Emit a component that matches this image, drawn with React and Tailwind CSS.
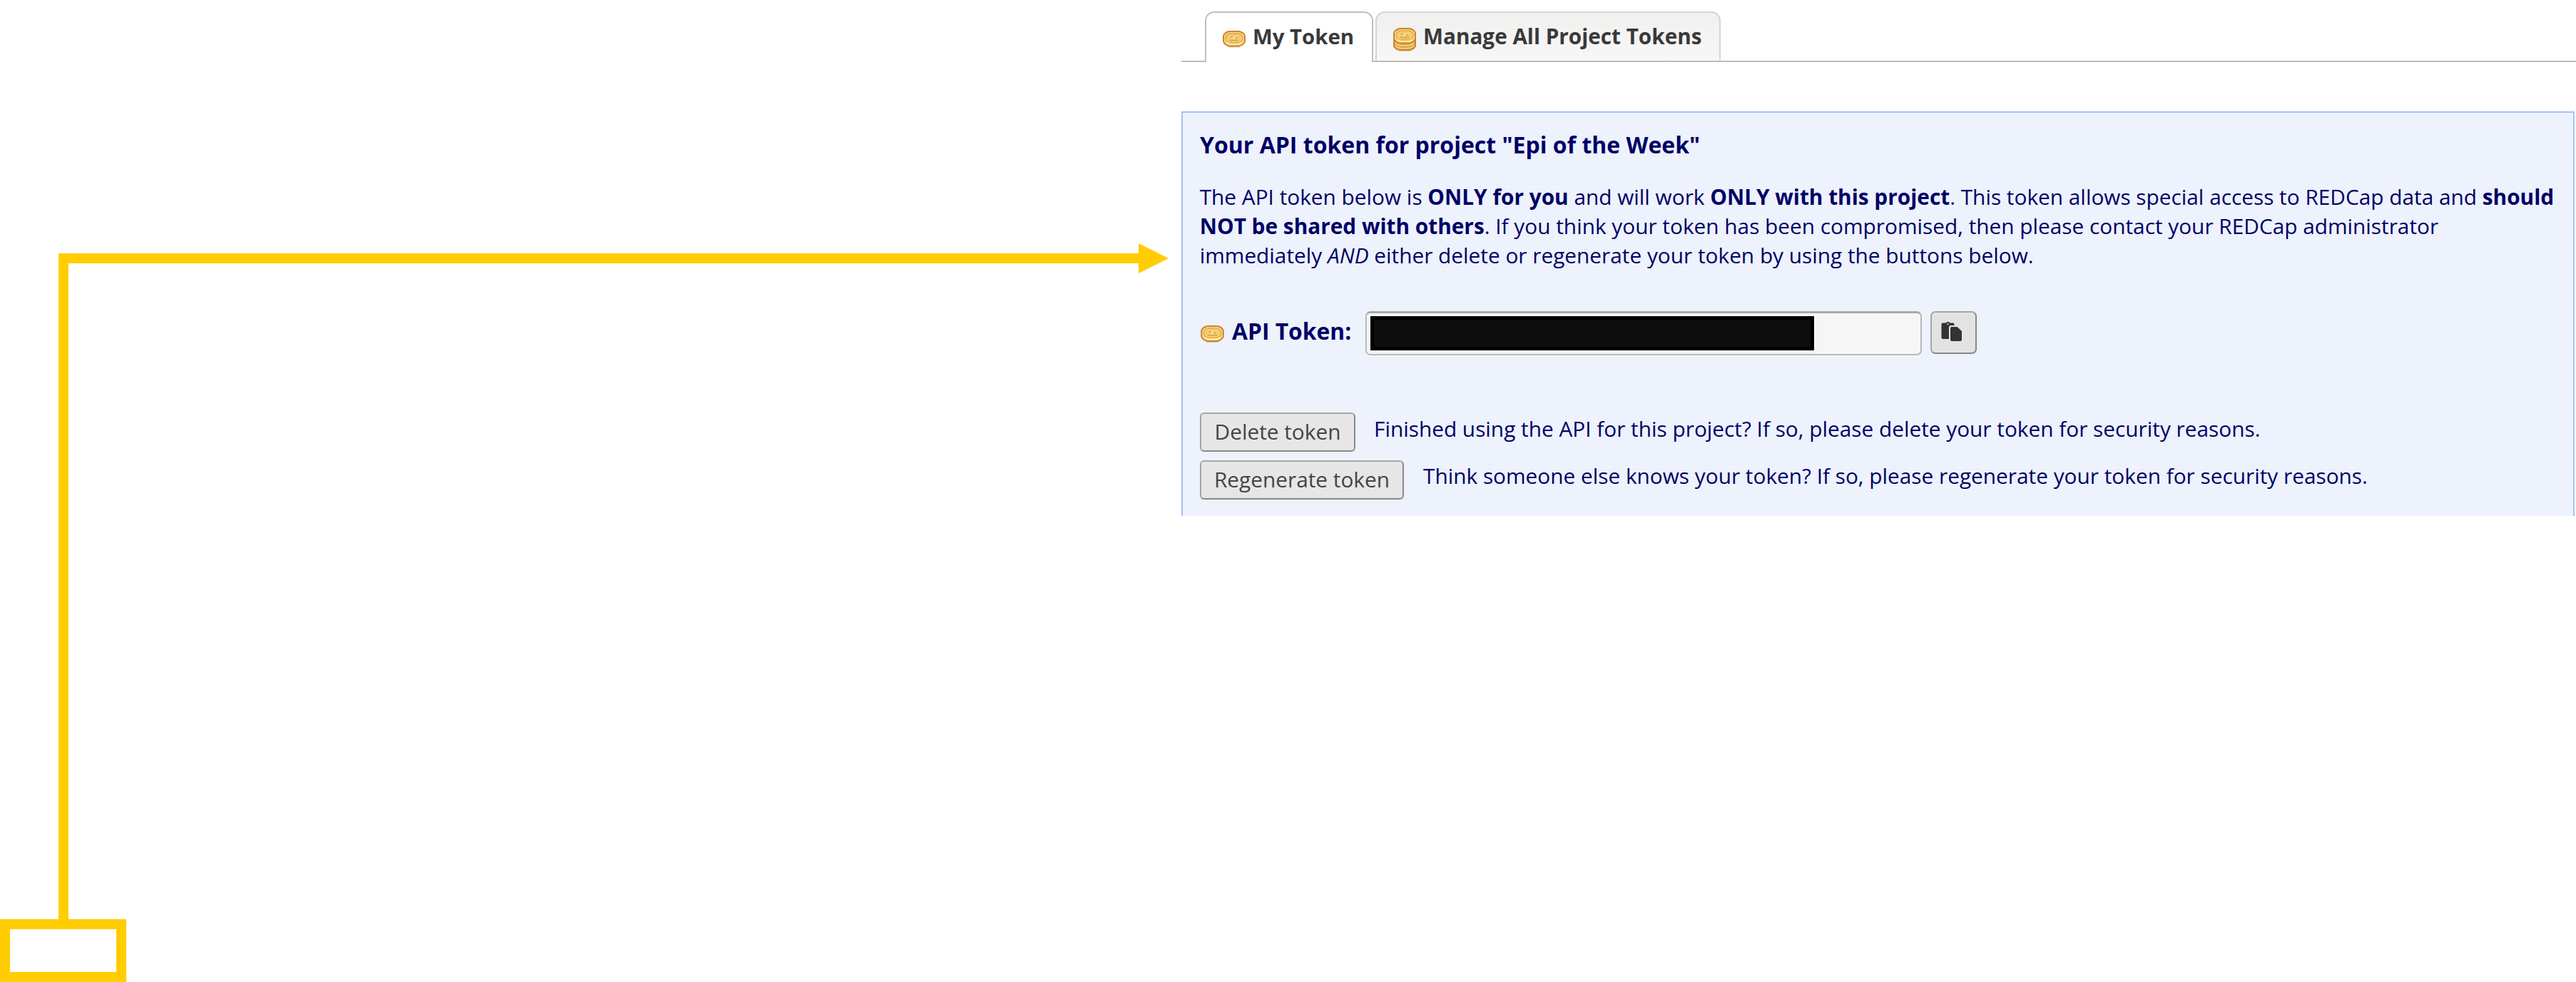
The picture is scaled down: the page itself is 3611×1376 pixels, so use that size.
function CoinFace({ y = 0 }) {
  return (
    <g transform={`translate(0 ${y})`}>
      <path d="M9 1H23C27 2 30 4 31 7V15C30 18.5 27 20.500 23 21.500H9C5 20.500 2 18.500 1 15V7C2 4 5 2 9 1Z" fill="#fbdb84" stroke="#cb8438" strokeWidth="2" strokeLinejoin="round" />
      <path d="M10 4H22C26 5 28 7 28 10V12C27 15 25 16.500 22 17H10C7 16.500 5 15 4 12V10C4 7 6 5 10 4Z" fill="#f3cd72" stroke="#dfa74b" strokeWidth="1.400" />
      <path d="M9.500 13.500H22.500M11 10L13.500 7.500M17 6.500V9.500L21 10.500" fill="none" stroke="#d6a04a" strokeWidth="1.400" />
      <path d="M14.500 11.500L18 7.500M6 16.500L10 18.800H22L26 16.500" fill="none" stroke="#ffeeae" strokeWidth="1.600" />
    </g>
  )
}

function Coin({ className }) {
  return (
    <svg viewBox="0 0 32 24" className={className} aria-hidden="true">
      <path d="M3 17.500L8.500 23.500H23.500L29 17.500Z" fill="#b9a58c" opacity="0.6" />
      <CoinFace />
    </svg>
  )
}

function CoinStack({ className }) {
  return (
    <svg viewBox="0 0 32 33" className={className} aria-hidden="true">
      <path d="M3 26L8.500 33H23.500L29 26Z" fill="#b9a58c" opacity="0.6" />
      <path d="M1 9H31V25.500C30 28.500 27 30.500 23 31H9C5 30.500 2 28.500 1 25.500Z" fill="#e0a24d" stroke="#cb8438" strokeWidth="2" strokeLinejoin="round" />
      <path d="M3 21C6 24.500 9 24.800 16 24.800S26 24.500 29 21M3 25C6 28.500 9 28.800 16 28.800S26 28.500 29 25" fill="none" stroke="#f8d377" strokeWidth="1.800" />
      <CoinFace />
    </svg>
  )
}

function PasteIcon({ className }) {
  return (
    <svg viewBox="0 0 30 28" className={className} aria-hidden="true" fill="#333333">
      <path d="M2.500 2.500H6.500A3.500 3 0 0 1 12.500 2.500H16.500Q18.500 2.500 18.500 4.500V6H14Q11 6 11 9V25H2.500Q.5 25 .5 23V4.500Q.5 2.500 2.500 2.500Z" />
      <circle cx="9.500" cy="4" r="1.300" fill="#9db4c6" />
      <path d="M15 8H22.500L29 14V26Q29 28 27 28H15Q13 28 13 26V10Q13 8 15 8Z" />
    </svg>
  )
}

function Tab({ icon, label, className, labelClass }) {
  return (
    <div className={`flex items-start rounded-t-[13px] border-x-2 border-t-2 pl-[23px] ${className}`}>
      {icon}
      <span className={`mt-[13px] whitespace-nowrap font-bold leading-[40px] text-[#393939] ${labelClass}`}>{label}</span>
    </div>
  )
}

function ActionRow({ label, text, className, buttonClass, textClass }) {
  return (
    <div className={`flex items-start ${className}`}>
      <button
        className={`flex h-[55px] justify-center rounded-[6px] border-2 border-t-[#a6a6a6] border-l-[#a6a6a6] border-r-[#888888] border-b-[#888888] bg-[#e6e6e6] pt-[5px] text-[29.800px] leading-[40px] whitespace-nowrap text-[#444444] ${buttonClass}`}
      >
        {label}
      </button>
      <span className={`mt-[2.400px] text-[29.8px] leading-[40px] whitespace-nowrap ${textClass}`}>{text}</span>
    </div>
  )
}

export default function App() {
  return (
    <div className="flex h-[1376px] w-[3611px] overflow-hidden bg-white font-['Open_Sans',sans-serif]">
      <div className="flex w-[1656px] shrink-0 flex-col">
        <svg width="1656" height="1288" viewBox="0 0 1656 1288" className="block" aria-hidden="true">
          <path d="M82 1288V355H1596V341L1638 362L1596 383V369H96V1288Z" fill="#ffcd00" />
        </svg>
        <div className="h-[88px] w-[177px] border-[14px] border-[#ffcd00]" />
      </div>

      <div className="flex w-[1955px] shrink-0 flex-col pt-[16px]">
        <div className="flex h-[71px]">
          <div className="w-[33px] border-b-[2.500px] border-[#bcbcbc]" />
          <Tab
            icon={<Coin className="mt-[25px] h-[24px] w-[32px] shrink-0" />}
            label="My Token"
            className="w-[236px] border-[#bfbfbf] bg-white"
            labelClass="ml-[10px] text-[29.400px]"
          />
          <div className="w-[3px] border-b-2 border-[#bcbcbc]" />
          <div className="flex border-b-2 border-[#bcbcbc]">
            <Tab
              icon={<CoinStack className="mt-[21px] h-[33px] w-[32px] shrink-0" />}
              label="Manage All Project Tokens"
              className="w-[484px] border-[#d4d4d4] bg-linear-to-b from-[#f0f0ef] to-[#f7f7f7]"
              labelClass="ml-[10px] text-[29.700px]"
            />
          </div>
          <div className="flex-1 border-b-2 border-[#bcbcbc]" />
        </div>

        <div className="mt-[69px] h-[567px] w-[1953px] border-x-2 border-t-2 border-[#a5c1f0] bg-[#edf2fd] pt-[23px] pl-[23px] text-[#000066]">
          <h1 className="ml-[1px] text-[32px] leading-[44px] font-bold">Your API token for project "Epi of the Week"</h1>
          <p className="mt-[29.500px] ml-[0.700px] text-[29.8px] leading-[41.400px] whitespace-nowrap">
            The API token below is <b>ONLY for you</b> and will work <b>ONLY with this project</b>. This token allows special access to REDCap data and <b>should</b>
            <br />
            <b>NOT be shared with others</b>. If you think your token has been compromised, then please contact your REDCap administrator
            <br />
            immediately <i>AND</i> either delete or regenerate your token by using the buttons below.
          </p>

          <div className="mt-[57.300px] flex h-[62px] items-start">
            <Coin className="mt-[20px] ml-[2px] h-[24.500px] w-[33px] shrink-0" />
            <span className="mt-[6px] ml-[11px] w-[187px] shrink-0 text-[31.800px] leading-[44px] font-bold whitespace-nowrap">API Token:</span>
            <div className="h-[62px] w-[780px] rounded-[7px] border-2 border-t-3 border-[#b8b8b8] border-t-[#a9a9a9] bg-[#f6f6f6] pt-[4px] pl-[5px] shadow-[0_2px_0_#f8faff]">
              <div className="h-[48px] w-[622px] border-[5px] border-black bg-[#0d0d0d]" />
            </div>
            <button className="ml-[12px] flex h-[60px] w-[65px] rounded-[7px] border-2 border-t-[#a6a6a6] border-l-[#a6a6a6] border-r-[#888888] border-b-[#888888] bg-[#e3e3e3] pt-[12px] pl-[13px]">
              <PasteIcon className="h-[28px] w-[30px]" />
            </button>
          </div>

          <ActionRow
            label="Delete token"
            text="Finished using the API for this project? If so, please delete your token for security reasons."
            className="mt-[80.300px] ml-[1px]"
            buttonClass="w-[218px]"
            textClass="ml-[26px]"
          />
          <ActionRow
            label="Regenerate token"
            text="Think someone else knows your token? If so, please regenerate your token for security reasons."
            className="mt-[11.700px] ml-[1px]"
            buttonClass="w-[286px]"
            textClass="ml-[27px]"
          />
        </div>
      </div>
    </div>
  )
}
